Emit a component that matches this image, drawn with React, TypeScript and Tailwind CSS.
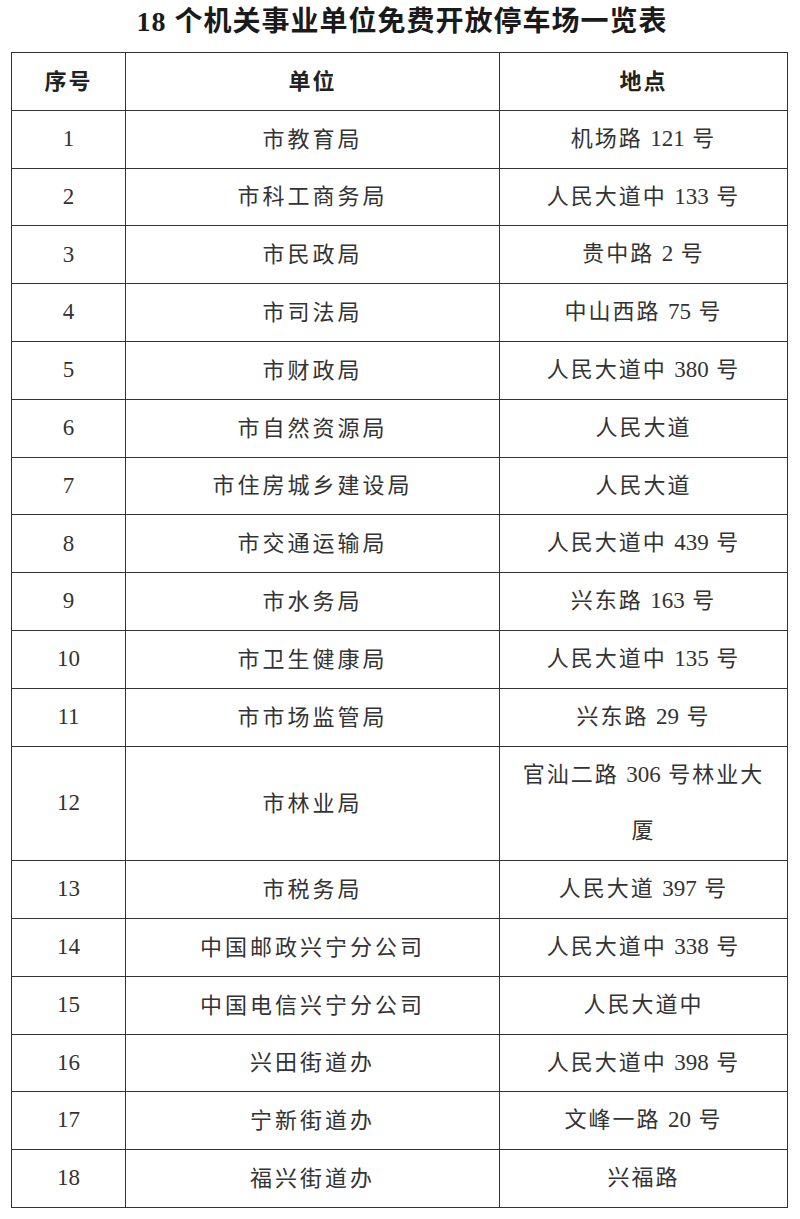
import React from 'react';

interface Row {
  no: string;
  unit: string;
  place: string[];
}

const rows: Row[] = [
  { no: '1', unit: '市教育局', place: ['机场路 121 号'] },
  { no: '2', unit: '市科工商务局', place: ['人民大道中 133 号'] },
  { no: '3', unit: '市民政局', place: ['贵中路 2 号'] },
  { no: '4', unit: '市司法局', place: ['中山西路 75 号'] },
  { no: '5', unit: '市财政局', place: ['人民大道中 380 号'] },
  { no: '6', unit: '市自然资源局', place: ['人民大道'] },
  { no: '7', unit: '市住房城乡建设局', place: ['人民大道'] },
  { no: '8', unit: '市交通运输局', place: ['人民大道中 439 号'] },
  { no: '9', unit: '市水务局', place: ['兴东路 163 号'] },
  { no: '10', unit: '市卫生健康局', place: ['人民大道中 135 号'] },
  { no: '11', unit: '市市场监管局', place: ['兴东路 29 号'] },
  { no: '12', unit: '市林业局', place: ['官汕二路 306 号林业大', '厦'] },
  { no: '13', unit: '市税务局', place: ['人民大道 397 号'] },
  { no: '14', unit: '中国邮政兴宁分公司', place: ['人民大道中 338 号'] },
  { no: '15', unit: '中国电信兴宁分公司', place: ['人民大道中'] },
  { no: '16', unit: '兴田街道办', place: ['人民大道中 398 号'] },
  { no: '17', unit: '宁新街道办', place: ['文峰一路 20 号'] },
  { no: '18', unit: '福兴街道办', place: ['兴福路'] },
];

const cell = 'border-[1.5px] border-[#333] text-center align-middle p-0';

// digits in Times widths, Chinese spaced out a little
function Mixed({ text }: { text: string }) {
  const parts = text.split(/(\d+)/);
  return (
    <>
      {parts.map((p, i) =>
        /^\d+$/.test(p) ? (
          <span key={i} className="tracking-normal text-[23px]">
            {p}
          </span>
        ) : (
          <span key={i}>{p}</span>
        )
      )}
    </>
  );
}

export default function App() {
  return (
    <div
      className="w-[800px] h-[1219px] bg-white pt-[5px]"
      style={{ fontFamily: '"Liberation Serif", "Noto Sans CJK SC", serif' }}
    >
      <h1 className="text-center text-[28px] leading-[34px] font-bold text-[#1a1a1a] tracking-[1px] pl-[4px]">
        18 个机关事业单位免费开放停车场一览表
      </h1>
      <table className="ml-[11px] mt-[13px] w-[776px] border-collapse table-fixed text-[22px] text-[#333]">
        <colgroup>
          <col className="w-[114px]" />
          <col className="w-[374px]" />
          <col className="w-[288px]" />
        </colgroup>
        <thead>
          <tr className="h-[57.8px]">
            <th className={`${cell} font-bold text-[#222] tracking-[2px]`}>序号</th>
            <th className={`${cell} font-bold text-[#222] tracking-[2px]`}>单位</th>
            <th className={`${cell} font-bold text-[#222] tracking-[2px]`}>地点</th>
          </tr>
        </thead>
        <tbody>
          {rows.map((r) => (
            <tr key={r.no} className="h-[56.6px]">
              <td className={`${cell} text-[23px]`}>{r.no}</td>
              <td className={`${cell} tracking-[3px]`}>{r.unit}</td>
              <td className={`${cell} tracking-[2px] leading-[56.8px]`}>
                {r.place.map((line, i) => (
                  <div key={i}>
                    <Mixed text={line} />
                  </div>
                ))}
              </td>
            </tr>
          ))}
        </tbody>
      </table>
    </div>
  );
}
